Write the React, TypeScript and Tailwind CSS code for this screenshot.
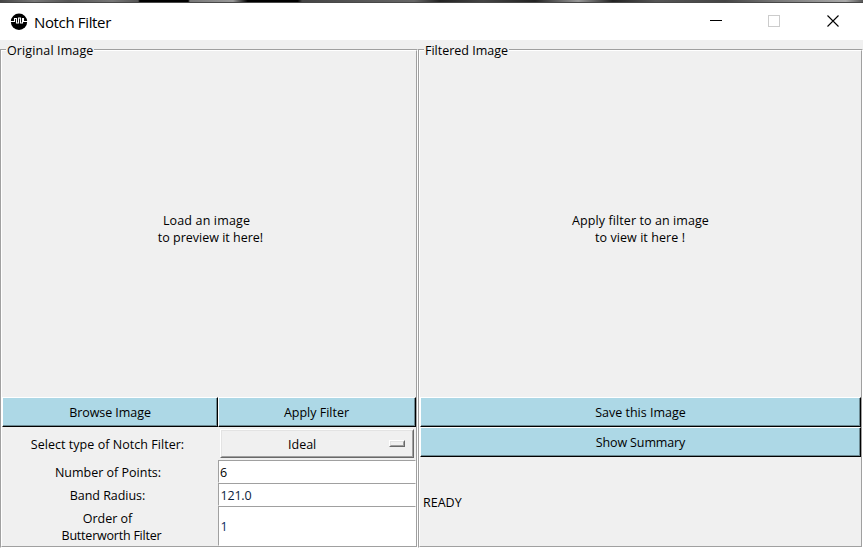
import React from "react";

function Raised({ className = "", children }: { className?: string; children: React.ReactNode }) {
  return (
    <button
      className="block border border-t-white border-l-white border-r-black border-b-black"
    >
      <span className={`flex h-full w-full items-center justify-center border-r border-b border-[#6c8a93] bg-[#add8e6] pt-[2px] whitespace-nowrap ${className}`}>
        {children}
      </span>
    </button>
  );
}

function Group({ title, titleClass, className = "", children }: { title: string; titleClass: string; className?: string; children: React.ReactNode }) {
  return (
    <section className={`relative mt-[9px] h-[499px] border border-t-[#a0a0a0] border-l-[#a0a0a0] border-r-white border-b-white ${className}`}>
      <div className="h-full border border-t-white border-l-white border-r-[#a0a0a0] border-b-[#a0a0a0]">{children}</div>
      <h2 className={`absolute -top-[9px] left-[5px] h-4 bg-[#f0f0f0] pl-px leading-5 whitespace-nowrap ${titleClass}`}>{title}</h2>
    </section>
  );
}

function Entry({ value, className = "" }: { value: string; className?: string }) {
  return (
    <div className={`flex items-center border border-t-[#a0a0a0] border-l-[#a0a0a0] border-r-white border-b-white bg-white ${className}`}>
      {value}
    </div>
  );
}

export default function App() {
  return (
    <div className="h-[548px] w-[863px] overflow-hidden bg-[#f0f0f0] font-['Open_Sans','Noto_Sans',sans-serif] text-[12.5px] leading-[17px] text-black">
      <div className="h-[3px] border-b border-[#484848] bg-[linear-gradient(90deg,#444_0%,#777_4%,#555_8%,#777_13%,#555_16%,#000_16.2%,#000_21.8%,#777_22%,#999_27%,#000_28.7%,#000_34.5%,#444_35%,#666_48%,#222_51%,#444_56%,#222_62%,#999_67%,#222_71%,#555_76%,#444_84%,#777_90%,#aaa_98%,#555_100%)]" />
      <header className="flex h-[37px] items-center bg-white">
        <svg className="ml-[10px] h-[18px] w-[18px]" viewBox="0 0 18 18">
          <circle cx="9" cy="8.7" r="8.2" fill="#000" />
          <path d="M0 8.5H4.5V5.5H6.5V10H8.5V5H10.5V10H12.5V5.5H13.5V8.5H18" fill="none" stroke="#fff" strokeWidth="1.1" />
        </svg>
        <h1 className="ml-[6px] text-[15px] leading-5 tracking-[-0.35px]">Notch Filter</h1>
        <svg className="ml-auto h-[37px] w-[174px]" viewBox="0 0 174 37" fill="none" shapeRendering="crispEdges">
          <path d="M21 17.5H33" stroke="#000" />
          <rect x="79.5" y="12.5" width="11" height="11" stroke="#ccc" />
          <path d="M138.5 12.5L149.5 23.5M149.5 12.5L138.5 23.5" stroke="#000" strokeWidth="1.1" shapeRendering="auto" />
        </svg>
      </header>
      <main className="flex">
        <Group title="Original Image" titleClass="w-[88px] tracking-[0.12px]" className="w-[418px]">
          <div className="flex h-[346px] flex-col items-center justify-center pt-[9px] pl-[3px] whitespace-pre">
            <p className="mr-[8px] tracking-[0.15px]">Load an image</p>
            <p>to preview it here!</p>
          </div>
          <div className="grid grid-cols-[216px_198px] grid-rows-[30px_33px_23px_23px_40px]">
            <Raised className="pl-px tracking-[-0.06px]">Browse Image</Raised>
            <Raised>Apply Filter</Raised>
            <label className="flex items-center justify-center pt-[2px] pr-[5px] tracking-[0.04px] whitespace-nowrap">Select type of Notch Filter:</label>
            <div className="mt-[2px] ml-[2px] h-[29px] w-[194px] border border-t-white border-l-white border-r-[#696969] border-b-[#696969]">
              <div className="flex h-full items-center border border-t-[#e3e3e3] border-l-[#e3e3e3] border-r-[#a0a0a0] border-b-[#a0a0a0]">
                <span className="ml-[66px] pt-[2px]">Ideal</span>
                <span className="mr-[7px] ml-auto block h-[7px] w-4 border border-t-white border-l-white border-r-[#696969] border-b-[#696969]">
                  <span className="block h-full border border-t-[#e3e3e3] border-l-[#e3e3e3] border-r-[#a0a0a0] border-b-[#a0a0a0]" />
                </span>
              </div>
            </div>
            <label className="flex items-center justify-center pt-px pr-[4px]">Number of Points:</label>
            <Entry value="6" className="pt-[2px] pl-px" />
            <label className="flex items-center justify-center pt-[2px] pr-[5px] tracking-[-0.04px]">Band Radius:</label>
            <Entry value="121.0" className="pt-[2px] pl-[1.5px] tracking-[-0.2px] text-[#0a1c3c]" />
            <label className="flex flex-col items-center justify-center pt-[2px] pl-[3px]">
              <span className="mr-[8px]">Order of</span>
              <span className="tracking-[-0.22px]">Butterworth Filter</span>
            </label>
            <Entry value="1" className="pl-[1.5px] text-[#0a2a5a]" />
          </div>
        </Group>
        <Group title="Filtered Image" titleClass="w-[85px]" className="w-[445px]">
          <div className="flex h-[346px] flex-col items-center justify-center pt-[9px]">
            <p className="tracking-[0.09px]">Apply filter to an image</p>
            <p className="mr-px tracking-[0.08px]">to view it here !</p>
          </div>
          <div className="grid grid-rows-[30px_30px_89px]">
            <Raised className="pl-px">Save this Image</Raised>
            <Raised className="pl-px tracking-[-0.12px]">Show Summary</Raised>
            <p className="flex items-center pt-[2px] pl-[3px]">READY</p>
          </div>
        </Group>
      </main>
    </div>
  );
}
